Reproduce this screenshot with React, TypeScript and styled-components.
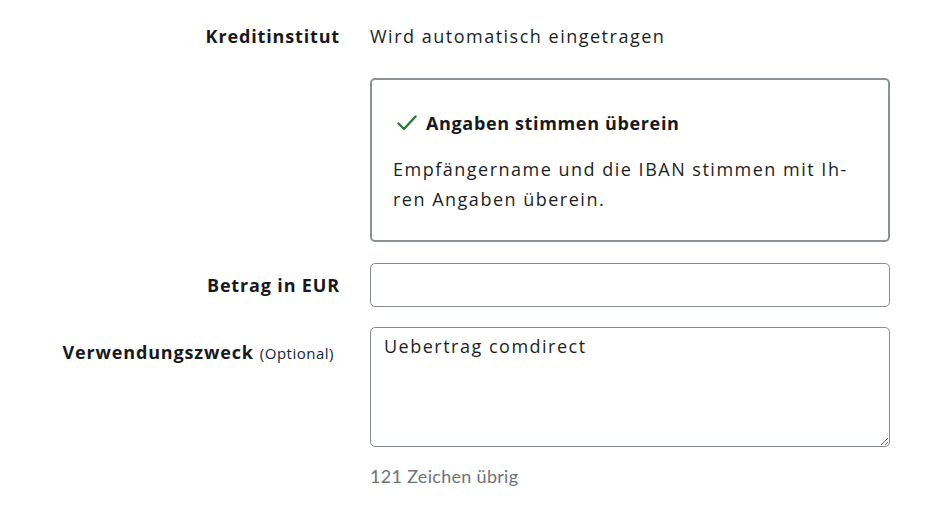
import React from "react";
import styled, { createGlobalStyle } from "styled-components";

const Global = createGlobalStyle`
  html, body { margin: 0; padding: 0; background: #ffffff; }
  body { font-family: "Open Sans", "Noto Sans", sans-serif; color: #1b1f24; letter-spacing: 1.5px; }
  * { box-sizing: border-box; }
`;

const Form = styled.div`
  width: 946px;
  padding-top: 23px;
  display: grid;
  grid-template-columns: 340px 520px;
  column-gap: 30px;
  row-gap: 21px;
  align-items: start;
`;

const Label = styled.div<{ $offset?: number }>`
  text-align: right;
  font-size: 18px;
  font-weight: 700;
  letter-spacing: 0.85px;
  line-height: 26px;
  color: #16191d;
  padding-top: ${(p) => p.$offset ?? 0}px;
  white-space: nowrap;
`;

const Optional = styled.span`
  font-size: 15px;
  font-weight: 400;
  letter-spacing: 0.5px;
  color: #10263b;
  margin-left: 6px;
  margin-right: 6px;
`;

const Value = styled.div`
  font-size: 18px;
  line-height: 26px;
  color: #1b1f24;
`;

const Field = styled.div`
  display: flex;
  flex-direction: column;
`;

const Notice = styled.div`
  grid-column: 2;
  border: 2px solid #8a9296;
  border-radius: 5px;
  padding: 30px 20px 26px 21px;
  margin-top: 8px;
`;

const NoticeHead = styled.div`
  display: flex;
  align-items: center;
  gap: 9px;
  font-size: 18px;
  font-weight: 700;
  letter-spacing: 0.65px;
  line-height: 26px;
  color: #16191d;
  padding-left: 4px;
`;

const NoticeBody = styled.p`
  margin: 18px 0 0;
  font-size: 18px;
  line-height: 30px;
  color: #1b1f24;
`;

const Input = styled.input`
  width: 100%;
  height: 44px;
  border: 1px solid #858d92;
  border-radius: 5px;
  font: inherit;
  font-size: 18px;
  padding: 0 13px;
  outline: none;
`;

const Area = styled.textarea`
  width: 100%;
  height: 120px;
  margin-top: -1px;
  border: 1px solid #858d92;
  border-radius: 5px;
  font-family: inherit;
  font-size: 18px;
  letter-spacing: 1.5px;
  line-height: 22px;
  color: #1b1f24;
  padding: 7px 13px;
  outline: none;
  resize: vertical;
  display: block;
`;

const Counter = styled.div`
  margin-top: 17px;
  font-family: Lato, "Liberation Sans", sans-serif;
  font-size: 18px;
  letter-spacing: 0.3px;
  line-height: 24px;
  color: #6c7479;
`;

const Check = () => (
  <svg width="20" height="16" viewBox="0 0 20 16" fill="none">
    <path d="M1.5 8.5 L7 14 L18.5 1.5" stroke="#2a7a3a" strokeWidth="2.4" strokeLinecap="round" strokeLinejoin="round" />
  </svg>
);

export default function App() {
  return (
    <>
      <Global />
      <Form>
        <Label>Kreditinstitut</Label>
        <Value>Wird automatisch eingetragen</Value>

        <Notice>
          <NoticeHead>
            <Check />
            Angaben stimmen überein
          </NoticeHead>
          <NoticeBody>
            Empfängername und die IBAN stimmen mit Ih{"\u00AD"}ren Angaben überein.
          </NoticeBody>
        </Notice>

        <Label $offset={9}>Betrag in EUR</Label>
        <Input type="text" defaultValue="" />

        <Label $offset={11}>
          Verwendungszweck<Optional>(Optional)</Optional>
        </Label>
        <Field>
          <Area defaultValue="Uebertrag comdirect" />
          <Counter>121 Zeichen übrig</Counter>
        </Field>
      </Form>
    </>
  );
}
